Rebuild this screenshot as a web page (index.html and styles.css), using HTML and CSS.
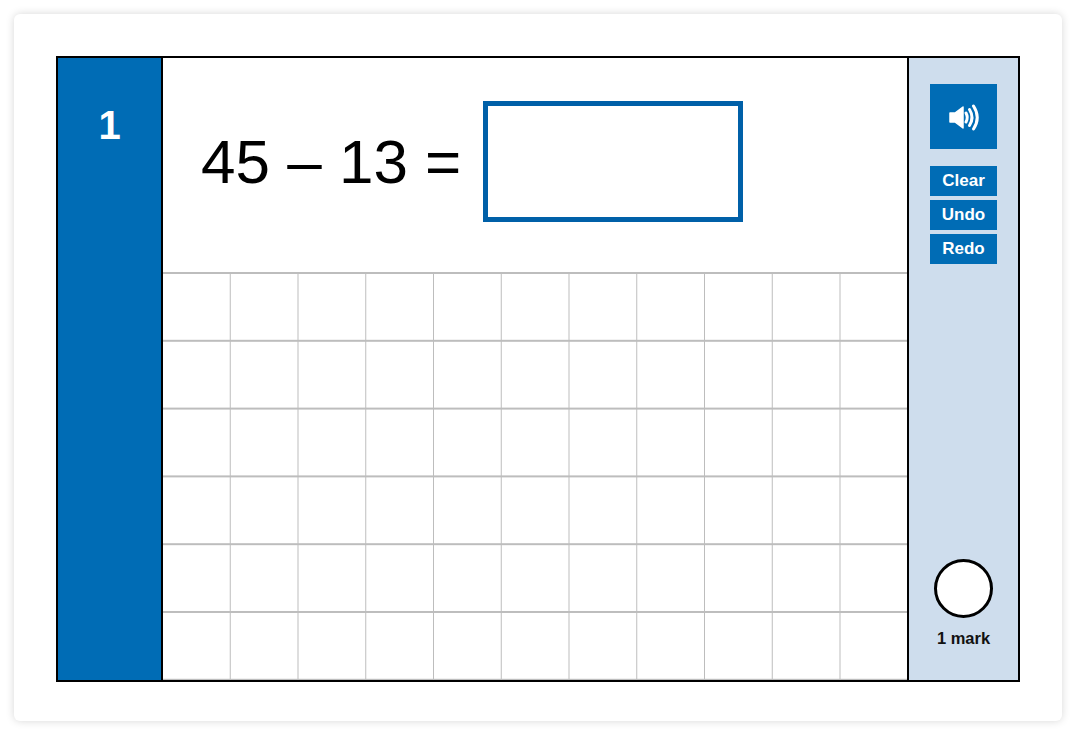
FILE: index.html
```html
<!DOCTYPE html>
<html>
<head>
<title>Question 1</title>
<link rel="stylesheet" href="styles.css">
</head>
<body>
    <div class="card">
        <div class="frame">
            <div class="number">1</div>
            <div class="main">
                <div class="question">
                    <span class="sum">45 – 13 =</span>
                    <div class="answer"></div>
                </div>
                <div class="grid"></div>
            </div>
            <div class="side">
                <button class="sound" aria-label="Play sound">
                    <svg width="30" height="28" viewBox="0 0 30 28">
                        <path d="M1 10h5l8-6v21l-8-6H1z" fill="#fff" stroke="#fff" stroke-width="1.500" stroke-linejoin="round"/>
                        <g fill="none" stroke="#fff" stroke-width="3" stroke-linecap="round">
                            <path d="M17 10q2.500 4.500 0 9"/>
                            <path d="M20.500 6.500q5 8 0 16"/>
                            <path d="M24.500 3q7.500 11.500 0 23"/>
                        </g>
                    </svg>
                </button>
                <button class="tool">Clear</button>
                <button class="tool">Undo</button>
                <button class="tool">Redo</button>
                <div class="marks">
                    <div class="circle"></div>
                    <div class="mark-label">1 mark</div>
                </div>
            </div>
        </div>
    </div>
</body>
</html>
```
FILE: styles.css
```css
html {
    font-family: "Liberation Sans", Arial, sans-serif;
    background: #fff;
}
body {
    margin: 0;
    padding: 14px 14px 15px;
    height: 736px;
    box-sizing: border-box;
    overflow: hidden;
}

.card {
    height: 100%;
    padding: 42px 42px 39px;
    box-sizing: border-box;
    background: #fff;
    border-radius: 6px;
    box-shadow: 0 0 8px rgba(0, 0, 0, .16);
}
.frame {
    display: flex;
    height: 626px;
    box-sizing: border-box;
    border: 2px solid #000;
}

.number {
    width: 103px;
    padding-top: 47px;
    box-sizing: border-box;
    background: #006cb5;
    color: #fff;
    font-size: 40px;
    font-weight: bold;
    line-height: 40px;
    text-align: center;
}

.main {
    display: flex;
    flex-direction: column;
    width: 748px;
    box-sizing: border-box;
    border-left: 2px solid #000;
    border-right: 2px solid #000;
}
.question {
    display: flex;
    align-items: center;
    height: 214px;
    padding: 0 0 8px 38px;
    box-sizing: border-box;
}
.sum {
    width: 282px;
    font-size: 62px;
    white-space: nowrap;
}
.answer {
    width: 260px;
    height: 121px;
    margin-top: 1px;
    box-sizing: border-box;
    border: 5px solid #0060a8;
}
.grid {
    flex: 1;
    border-top: 2px solid #bdbdbd;
    background-image:
        linear-gradient(to right, transparent 66.6px, #bdbdbd 66.6px, #bdbdbd 67.75px),
        linear-gradient(to bottom, transparent 66px, #bdbdbd 66px, #bdbdbd 67.8px);
    background-size: 67.75px 67.8px;
}

.side {
    flex: 1;
    display: flex;
    flex-direction: column;
    align-items: center;
    padding-top: 26px;
    background: #cedded;
}
button {
    display: block;
    width: 67px;
    padding: 0;
    border: none;
    background: #006cb5;
    color: #fff;
    font-family: inherit;
    font-weight: bold;
}
.sound {
    display: flex;
    align-items: center;
    justify-content: center;
    height: 65px;
    margin-bottom: 17px;
}
.tool {
    height: 30px;
    margin-bottom: 4px;
    font-size: 17px;
}

.marks {
    margin-top: auto;
    padding-bottom: 33px;
    text-align: center;
}
.circle {
    width: 59px;
    height: 59px;
    margin: 0 auto 11px;
    box-sizing: border-box;
    border: 3px solid #000;
    border-radius: 50%;
    background: #fff;
}
.mark-label {
    font-size: 16.500px;
    font-weight: bold;
    line-height: 18px;
    color: #111;
}
```
